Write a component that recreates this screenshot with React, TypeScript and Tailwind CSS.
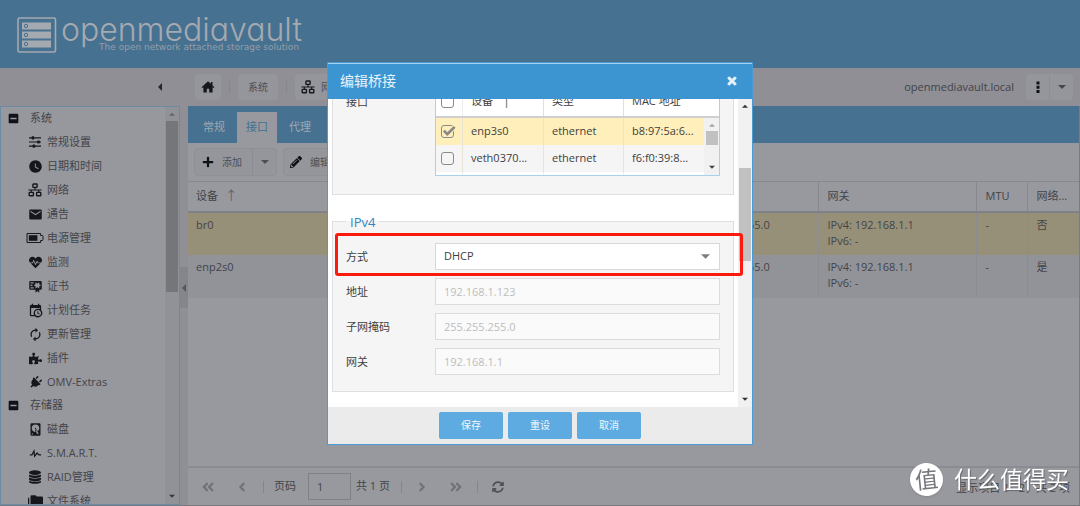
import React from "react";
import {
  FaAngleDoubleLeft,
  FaAngleDoubleRight,
  FaAngleLeft,
  FaAngleRight,
  FaHeartbeat,
  FaMinusSquare,
  FaPencilAlt,
  FaPlug,
  FaPlus,
  FaPuzzlePiece,
  FaSyncAlt,
  FaTimes,
} from "react-icons/fa";
import { MdAutorenew, MdEmail, MdWatchLater } from "react-icons/md";

const MdiIcon = ({ d, className }: { d: string; className: string }) => (
  <svg viewBox="0 0 24 24" className={className} fill="currentColor" fillRule="evenodd" aria-hidden="true">
    <path d={d} />
  </svg>
);

const SlidersIcon = () => (
  <svg viewBox="0 0 14 14" className="size-3.5" fill="currentColor" aria-hidden="true">
    <path d="M1 2.3h12v1.2H1zM1 6.4h12v1.2H1zM1 10.5h12v1.2H1z" />
    <rect x="3.6" y="1.3" width="2.6" height="3.2" rx=".8" />
    <rect x="9.2" y="5.4" width="2.6" height="3.2" rx=".8" />
    <rect x="4.6" y="9.5" width="2.6" height="3.2" rx=".8" />
  </svg>
);

const NetworkIcon = () => (
  <svg viewBox="0 0 14 14" className="size-3.5" fill="none" stroke="currentColor" strokeWidth="1.4" aria-hidden="true">
    <rect x="4.9" y="1" width="4.2" height="3.4" rx=".6" />
    <rect x="1.2" y="9.4" width="4.2" height="3.4" rx=".6" />
    <rect x="8.6" y="9.4" width="4.2" height="3.4" rx=".6" />
    <path d="M7 4.4v2.6M.4 7h13.2M3.3 7v2.4M10.7 7v2.4" strokeWidth="1.1" />
  </svg>
);

const BatteryIcon = () => (
  <svg viewBox="0 0 18 12" className="h-3 w-[18px] shrink-0" aria-hidden="true">
    <path d="M1 1.5h13.6v2h1.6c.5 0 .8.4.8.9v3.2c0 .5-.3.9-.8.9h-1.6v2H1z" fill="none" stroke="currentColor" strokeWidth="1" />
    <rect x="2.8" y="3.2" width="8.6" height="5.6" fill="currentColor" />
  </svg>
);

const StackIcon = () => (
  <svg viewBox="0 0 14 14" className="size-3.5" fill="currentColor" aria-hidden="true">
    <ellipse cx="7" cy="2.6" rx="6" ry="2.3" />
    <path d="M1 4.5c1.4 1.5 10.6 1.5 12 0v1.6c0 2.6-12 2.6-12 0zM1 7.6c1.4 1.5 10.6 1.5 12 0v1.6c0 2.6-12 2.6-12 0zM1 10.7c1.4 1.5 10.6 1.5 12 0v1c0 2.8-12 2.8-12 0z" />
  </svg>
);

const HomeIcon = () => (
  <svg viewBox="0 0 14 14" className="size-3.5" fill="currentColor" aria-hidden="true">
    <path d="M7 1.2L.6 7.2l.8.9 1-.8v5.3h3.4V8.8h2.4v3.8h3.4V7.3l1 .8.8-.9-1.9-1.8V2h-1.7v1.8z" />
  </svg>
);

const Caret = ({ dir, className = "w-2" }: { dir: "up" | "down" | "left"; className?: string }) => {
  const path = { up: "M0 5l4-4 4 4z", down: "M0 1h8L4 5z", left: "M6 0v8L2 4z" }[dir];
  return (
    <svg viewBox={dir === "left" ? "0 0 8 8" : "0 0 8 6"} className={"shrink-0 " + className} fill="currentColor" aria-hidden="true">
      <path d={path} />
    </svg>
  );
};

const CERT =
  "M4,3C2.89,3 2,3.89 2,5V15A2,2 0 0,0 4,17H12V22L15,19L18,22V17H20A2,2 0 0,0 22,15V5A2,2 0 0,0 20,3H4M12,5L15,7L18,5V8.5L21,10L18,11.5V15L15,13L12,15V11.5L9,10L12,8.5V5M4,5H9V7H4V5M4,9H7V11H4V9M4,13H9V15H4V13Z";
const CALENDAR =
  "M15,13H16.5V15.82L18.94,17.23L18.19,18.53L15,16.69V13M19,8H5V19H9.67C9.24,18.09 9,17.07 9,16A7,7 0 0,1 16,9C17.07,9 18.09,9.24 19,9.67V8M5,21C3.89,21 3,20.1 3,19V5C3,3.89 3.89,3 5,3H6V1H8V3H16V1H18V3H19A2,2 0 0,1 21,5V11.1C22.24,12.36 23,14.09 23,16A7,7 0 0,1 16,23C14.09,23 12.36,22.24 11.1,21H5M16,11.15A4.85,4.85 0 0,0 11.15,16C11.15,18.68 13.32,20.85 16,20.85A4.85,4.85 0 0,0 20.85,16C20.85,13.32 18.68,11.15 16,11.15Z";
const DISK =
  "M6,2H18A2,2 0 0,1 20,4V20A2,2 0 0,1 18,22H6A2,2 0 0,1 4,20V4A2,2 0 0,1 6,2M12,4A6,6 0 0,0 6,10C6,13.31 8.69,16 12.1,16L11.22,13.77C10.95,13.29 11.11,12.68 11.59,12.4L12.45,11.9C12.93,11.63 13.54,11.79 13.82,12.27L15.74,14.69C17.12,13.59 18,11.9 18,10A6,6 0 0,0 12,4M12,9A1,1 0 0,1 13,10A1,1 0 0,1 12,11A1,1 0 0,1 11,10A1,1 0 0,1 12,9M7,18A1,1 0 0,0 6,19A1,1 0 0,0 7,20A1,1 0 0,0 8,19A1,1 0 0,0 7,18M12.09,13.27L14.58,19.58L17.17,18.08L12.95,12.77L12.09,13.27Z";
const PULSE =
  "M3,13H5.79L10.1,4.79L11.28,13.75L14.5,9.66L17.83,13H21V15H17L14.67,12.67L9.92,18.73L8.94,11.31L7,15H3V13Z";
const FOLDERS =
  "M22,4H14L12,2H6A2,2 0 0,0 4,4V16A2,2 0 0,0 6,18H22A2,2 0 0,0 24,16V6A2,2 0 0,0 22,4M2,6H0V20A2,2 0 0,0 2,22H20V20H2V6Z";

const tree = [
  {
    title: "系统",
    items: [
      { label: "常规设置", icon: <SlidersIcon /> },
      { label: "日期和时间", icon: <MdWatchLater className="size-[15px]" /> },
      { label: "网络", icon: <NetworkIcon /> },
      { label: "通告", icon: <MdEmail className="size-[15px]" /> },
      { label: "电源管理", icon: <BatteryIcon /> },
      { label: "监测", icon: <FaHeartbeat className="size-[13px]" /> },
      { label: "证书", icon: <MdiIcon d={CERT} className="size-[15px]" /> },
      { label: "计划任务", icon: <MdiIcon d={CALENDAR} className="size-[15px]" /> },
      { label: "更新管理", icon: <MdAutorenew className="size-[15px]" /> },
      { label: "插件", icon: <FaPuzzlePiece className="size-[13px]" /> },
      { label: "OMV-Extras", icon: <FaPlug className="size-[13px] rotate-45" /> },
    ],
  },
  {
    title: "存储器",
    items: [
      { label: "磁盘", icon: <MdiIcon d={DISK} className="size-[15px]" /> },
      { label: "S.M.A.R.T.", icon: <MdiIcon d={PULSE} className="size-[15px]" /> },
      { label: "RAID管理", icon: <StackIcon /> },
      { label: "文件系统", icon: <MdiIcon d={FOLDERS} className="size-[15px]" /> },
    ],
  },
];

const Separator = () => <span className="h-3 w-px bg-[#85868c]" />;

function Header() {
  return (
    <header className="flex h-[68px] shrink-0 items-start bg-[#467191] pt-[17px] pl-[17px] text-[#a5a9b0]">
      <svg viewBox="0 0 40 36" className="h-9 w-10" aria-hidden="true">
        <rect x="1" y="1" width="37.5" height="34" rx="1.5" fill="none" stroke="currentColor" strokeWidth="1.6" />
        <g fill="currentColor">
          <path d="M5 5.5h29v7H5zM5 14.5h29v7H5zM5 23.5h29v7H5z" />
        </g>
        <g fill="none" stroke="#467191" strokeWidth="1">
          <circle cx="9" cy="9" r="1.7" />
          <circle cx="9" cy="18" r="1.7" />
          <circle cx="9" cy="27" r="1.7" />
        </g>
      </svg>
      <div className="ml-1 flex flex-col items-end">
        <div className="font-[Inter,sans-serif] text-[32px] leading-[25px] font-light [font-feature-settings:'cv11']">openmediavault</div>
        <div className="pr-[3px] font-['DejaVu_Sans',sans-serif] text-[9px] leading-[10px] text-[#959da7]">
          The open network attached storage solution
        </div>
      </div>
    </header>
  );
}

function NavBar() {
  return (
    <div className="flex h-[38px] shrink-0 items-center bg-[#8f8f95] pr-[7px] text-[11px]">
      <div className="flex w-[188px] justify-end pr-6">
        <button aria-label="折叠" className="text-[#25262a]">
          <Caret dir="left" />
        </button>
      </div>
      <nav className="flex items-center gap-2 pl-[7px] text-[10px]">
        <button aria-label="主页" className="flex size-[26px] items-center justify-center rounded-sm bg-[#95969c] text-[#17181c]">
          <HomeIcon />
        </button>
        <Separator />
        <button className="h-[26px] rounded-sm bg-[#95969c] px-[10px] text-[#4d4e52]">系统</button>
        <Separator />
        <button className="flex h-[26px] items-center gap-[6px] rounded-sm bg-[#95969c] px-[6px] text-[#4d4e52]">
          <span className="text-[#17181c]">
            <NetworkIcon />
          </span>
          网络
        </button>
      </nav>
      <div className="ml-auto flex items-center gap-3">
        <span>openmediavault.local</span>
        <div className="flex">
          <button aria-label="菜单" className="flex h-[26px] w-6 items-center justify-center rounded-l-sm border-r border-[#8d8e94] bg-[#95969c] text-[#101114]">
            <svg viewBox="0 0 4 12" className="h-3 w-1" fill="currentColor" aria-hidden="true">
              <path d="M.5.5h3v3h-3zM.5 4.7h3v3h-3zM.5 8.9h3v3h-3z" />
            </svg>
          </button>
          <button aria-label="展开菜单" className="flex h-[26px] w-[23px] items-center justify-center rounded-r-sm bg-[#95969c] text-[#45464a]">
            <Caret dir="down" />
          </button>
        </div>
      </div>
    </div>
  );
}

function Sidebar() {
  return (
    <aside className="flex w-[180px] shrink-0 overflow-hidden border border-[#6b8ba3] bg-[#97989e]">
      <div className="min-w-0 flex-1">
        {tree.map((group) => (
          <section key={group.title}>
            <h2 className="flex h-[23px] items-center gap-[11px] pl-[7px]">
              <FaMinusSquare className="size-[11px] text-[#101217]" />
              {group.title}
            </h2>
            <ul>
              {group.items.map((item) => (
                <li key={item.label}>
                  <a href="#" className="flex h-6 items-center pl-[25px]">
                    <span className="flex w-[21px] justify-center pr-[3px] text-[#15171c]">{item.icon}</span>
                    <span className="whitespace-nowrap">{item.label}</span>
                  </a>
                </li>
              ))}
            </ul>
          </section>
        ))}
      </div>
      <div className="flex w-[14px] flex-col items-center justify-between bg-[#919298] pt-[5px] pb-[6px]">
        <div className="flex flex-col items-center gap-1">
          <Caret dir="up" className="w-[6px] text-[#65666b]" />
          <div className="h-[171px] w-3 bg-[#75767a]" />
        </div>
        <Caret dir="down" className="w-[6px] text-[#35363a]" />
      </div>
    </aside>
  );
}

function InterfaceTable() {
  const rows = [
    { name: "br0", def: "否", bg: "bg-[#979079]" },
    { name: "enp2s0", def: "是", bg: "bg-[#929399]" },
  ];
  return (
    <table className="w-full table-fixed border-collapse text-left">
      <colgroup>
        <col />
        <col className="w-[156px]" />
        <col className="w-[158px]" />
        <col className="w-[51px]" />
        <col className="w-[52px]" />
      </colgroup>
      <thead>
        <tr className="h-[30px] border-t border-b-2 border-t-[#88898f] border-b-[#808187]">
          <th className="pl-2 font-normal">
            设备 <span className="ml-1 text-[13px] leading-none text-[#606166]">↑</span>
          </th>
          <th />
          <th className="border-l border-[#87888e] pl-[9px] font-normal">网关</th>
          <th className="border-l border-[#87888e] pl-[9px] font-normal">MTU</th>
          <th className="border-l border-[#87888e] pl-[9px] font-normal whitespace-nowrap">网络...</th>
        </tr>
      </thead>
      <tbody>
        {rows.map((r) => (
          <tr key={r.name} className={"h-[43px] align-top leading-4 " + r.bg}>
            <td className="pt-1 pl-2">{r.name}</td>
            <td className="pt-1 pl-[9px]">
              IPv4: 255.255.255.0
              <br />
              IPv6: -
            </td>
            <td className="border-l border-[#8c8d90] pt-1 pl-[9px]">
              IPv4: 192.168.1.1
              <br />
              IPv6: -
            </td>
            <td className="border-l border-[#8c8d90] pt-1 pl-[9px]">-</td>
            <td className="border-l border-[#8c8d90] pt-1 pl-[9px]">{r.def}</td>
          </tr>
        ))}
      </tbody>
    </table>
  );
}

function Pager() {
  return (
    <footer className="flex h-[39px] shrink-0 items-center border-t-2 border-[#8b8c92] pr-[9px] pl-3">
      <button aria-label="首页" className="flex w-4 justify-center text-[#707176]">
        <FaAngleDoubleLeft className="size-3.5" />
      </button>
      <button aria-label="上一页" className="mr-[13px] ml-[18px] flex w-4 justify-center text-[#707176]">
        <FaAngleLeft className="size-3.5" />
      </button>
      <Separator />
      <label htmlFor="page" className="ml-[10px]">页码</label>
      <input id="page" defaultValue="1" className="mr-[5px] ml-3 h-[27px] w-[43px] border border-[#808187] bg-transparent px-2" />
      <span className="mr-[11px]">共 1 页</span>
      <Separator />
      <button aria-label="下一页" className="ml-3 flex w-4 justify-center text-[#707176]">
        <FaAngleRight className="size-3.5" />
      </button>
      <button aria-label="末页" className="mr-[13px] ml-[18px] flex w-4 justify-center text-[#707176]">
        <FaAngleDoubleRight className="size-3.5" />
      </button>
      <Separator />
      <button aria-label="刷新" className="ml-3.5 text-[#505156]">
        <FaSyncAlt className="size-3" />
      </button>
      <span className="ml-auto pt-1 whitespace-nowrap">显示项目 1 - 2，共 2 项</span>
    </footer>
  );
}

function MainPanel() {
  return (
    <main className="flex min-w-0 flex-1 flex-col border-r border-[#7b7c82] bg-[#98999f]">
      <div className="flex h-[37px] shrink-0 items-end gap-[3px] bg-[#467191] pl-[6px] text-[#9fa8b2]" role="tablist">
        <button role="tab" className="h-[31px] px-[9px]">常规</button>
        <button role="tab" aria-selected="true" className="h-[31px] bg-[#98999f] px-[9px] text-[#41708f]">接口</button>
        <button role="tab" className="h-[31px] px-[9px]">代理</button>
      </div>
      <div className="flex h-[38px] shrink-0 items-center gap-[6px] pl-[6px] text-[10px] text-[#4d4e52]">
        <div className="flex rounded-sm border border-[#8f9096] bg-[#95969c]">
          <button className="flex h-[26px] w-[57px] items-center gap-2 pl-[7px]">
            <FaPlus className="size-3 text-[#101114]" />
            添加
          </button>
          <button aria-label="更多添加选项" className="flex w-6 items-center justify-center border-l border-[#8b8c92]">
            <Caret dir="down" />
          </button>
        </div>
        <button className="flex h-7 items-center gap-2 rounded-sm border border-[#8f9096] bg-[#95969c] px-[6px]">
          <FaPencilAlt className="size-3 text-[#101114]" />
          编辑
        </button>
      </div>
      <InterfaceTable />
      <div className="flex-1" />
      <Pager />
    </main>
  );
}

function Tick({ label, checked = false }: { label: string; checked?: boolean }) {
  return (
    <span className="relative flex size-[13px]">
      <input
        type="checkbox"
        aria-label={label}
        defaultChecked={checked}
        className="size-[13px] appearance-none rounded-[3px] border border-[#8a8a8a]"
      />
      {checked && (
        <svg viewBox="0 0 16 14" className="pointer-events-none absolute top-0 left-0 h-[13px] w-[15px]" fill="none" aria-hidden="true">
          <path d="M3.5 6.5l3.2 3.2L14.5 2" stroke="#fdebb7" strokeWidth="5" />
          <path d="M3 6.1l3.7 3.7L14.6 2" stroke="#878787" strokeWidth="2.8" />
        </svg>
      )}
    </span>
  );
}

function DeviceGrid() {
  const rows = [
    { name: "enp3s0", mac: "b8:97:5a:6...", checked: true },
    { name: "veth0370...", mac: "f6:f0:39:8...", checked: false },
  ];
  const columns = "grid grid-cols-[26px_81px_80px_1fr] items-center";
  return (
    <div className="min-w-0 flex-1 border border-[#a9d0ec] bg-white">
      <div className={columns + " h-[31px] border-b-2 border-[#cfcfcf]"}>
        <span className="flex h-full items-center pl-[5px]">
          <Tick label="全选" />
        </span>
        <span className="flex h-full items-center border-l border-[#ececec] pl-2">
          设备 <span className="ml-[6px] text-[15px] text-[#777]">↑</span>
        </span>
        <span className="flex h-full items-center border-l border-[#e0e0e0] pl-2">类型</span>
        <span className="flex h-full items-center border-l border-[#e0e0e0] pl-2">MAC 地址</span>
      </div>
      <div className="flex h-[57px]">
        <div className="flex flex-1 flex-col">
          {rows.map((r) => (
            <div key={r.name} className={columns + " h-[27px] " + (r.checked ? "bg-[#ffefbb]" : "bg-[#f5f5f5]")}>
              <span className="flex h-full items-center pl-[5px]">
                <Tick label={r.name} checked={r.checked} />
              </span>
              <span className="flex h-full items-center border-l border-[#e9e4d6] pl-2">{r.name}</span>
              <span className="flex h-full items-center border-l border-[#e9e4d6] pl-2">ethernet</span>
              <span className="flex h-full items-center border-l border-[#e9e4d6] pl-2">{r.mac}</span>
            </div>
          ))}
          <div className="grid flex-1 grid-cols-[26px_81px_80px_1fr]">
            <span />
            <span className="border-l border-[#ededed]" />
            <span className="border-l border-[#ededed]" />
            <span className="border-l border-[#ededed]" />
          </div>
        </div>
        <div className="flex w-[15px] flex-col items-center justify-between bg-[#f1f1f1] py-[5px]">
          <div className="flex flex-col items-center gap-1">
            <Caret dir="up" className="w-[6px] text-[#a3a3a3]" />
            <div className="h-[14px] w-3 bg-[#c1c1c1]" />
          </div>
          <Caret dir="down" className="w-[6px] text-[#404040]" />
        </div>
      </div>
    </div>
  );
}

function EditDialog() {
  const fields = [
    { id: "address", label: "地址", value: "192.168.1.123" },
    { id: "netmask", label: "子网掩码", value: "255.255.255.0" },
    { id: "gateway", label: "网关", value: "192.168.1.1" },
  ];
  return (
    <div className="fixed inset-0 flex items-center justify-center">
      <div role="dialog" aria-labelledby="dialog-title" className="flex w-[426px] flex-col border border-[#4a9bd3] bg-white text-[#404040]">
        <div className="flex h-9 items-center justify-between border-t border-[#a4d1ef] bg-[#3c95d0] pr-[14px] pl-3 text-[#e8f3fa]">
          <h1 id="dialog-title" className="text-[14px] leading-4">编辑桥接</h1>
          <button aria-label="关闭">
            <FaTimes className="size-3 stroke-current stroke-[40]" />
          </button>
        </div>
        <div className="flex h-[308px] overflow-hidden">
          <form className="-mt-[26px] min-w-0 flex-1 px-1">
            <fieldset className="flex border border-[#dfdfdf] bg-[#f5f5f5] px-[13px] pt-[12px] pb-[18px]">
              <span className="w-[89px] pt-[6px] leading-5">接口</span>
              <DeviceGrid />
            </fieldset>
            <fieldset className="relative mt-[18px] flex flex-col gap-2 border border-[#dfdfdf] bg-[#f5f5f5] px-[13px] pt-3 pb-4">
              <legend className="px-1 text-[13px] leading-[18px] text-[#3085bf]">IPv4</legend>
              <div className="relative flex items-center">
                <label htmlFor="method" className="w-[89px] pt-[3px]">方式</label>
                <select id="method" className="h-[27px] min-w-0 flex-1 appearance-none border border-[#d8d8d8] bg-white px-2">
                  <option>DHCP</option>
                </select>
                <Caret dir="down" className="pointer-events-none absolute right-[10px] w-[9px] text-[#7d7d7d]" />
                <div className="pointer-events-none absolute -top-[10px] -right-[23px] -bottom-[6px] -left-[11px] z-10 rounded-[3px] border-[3px] border-[#ff1a0e]" />
              </div>
              {fields.map((f) => (
                <div key={f.id} className="flex items-center">
                  <label htmlFor={f.id} className="w-[89px] pt-[3px]">{f.label}</label>
                  <input
                    id={f.id}
                    disabled
                    defaultValue={f.value}
                    className="h-[27px] min-w-0 flex-1 border border-[#dcdcdc] bg-[#fafafa] px-2 text-[#bdbdbd]"
                  />
                </div>
              ))}
            </fieldset>
          </form>
          <div className="flex w-[14px] flex-col items-center justify-between bg-[#f1f1f1] py-[5px]">
            <div className="flex flex-col items-center">
              <Caret dir="up" className="mb-[60px] w-[6px] text-[#303030]" />
              <div className="h-[93px] w-3 bg-[#c1c1c1]" />
            </div>
            <Caret dir="down" className="w-[6px] text-[#303030]" />
          </div>
        </div>
        <div className="flex h-[37px] items-center justify-center gap-[5px] bg-[#ebebeb] text-[10px] text-[#f0f7fc]">
          <button className="h-[27px] w-16 rounded-[2px] bg-[#5dabe0]">保存</button>
          <button className="h-[27px] w-16 rounded-[2px] bg-[#5dabe0]">重设</button>
          <button className="h-[27px] w-16 rounded-[2px] bg-[#5dabe0]">取消</button>
        </div>
      </div>
    </div>
  );
}

function Watermark() {
  return (
    <div className="pointer-events-none fixed right-[11px] bottom-[9px] flex items-center gap-[11px] text-white">
      <span className="flex size-[33px] -rotate-6 items-center justify-center rounded-full bg-white text-[23px] text-[#75767b] shadow-sm">值</span>
      <span className="text-[23px] leading-9 [text-shadow:1px_1px_1px_#66676c]">什么值得买</span>
    </div>
  );
}

export default function App() {
  return (
    <div className="flex h-screen flex-col overflow-hidden border-b border-[#77787e] bg-[#8f8f95] font-['Open_Sans','Noto_Sans_CJK_SC',sans-serif] text-[11px] text-[#434448]">
      <Header />
      <NavBar />
      <div className="flex min-h-0 flex-1">
        <Sidebar />
        <div className="flex w-2 shrink-0 items-center pb-9">
          <button aria-label="收起侧栏" className="flex h-[41px] w-2 items-center justify-center bg-[#85868c] text-[#55565b]">
            <Caret dir="left" />
          </button>
        </div>
        <MainPanel />
      </div>
      <EditDialog />
      <Watermark />
    </div>
  );
}
